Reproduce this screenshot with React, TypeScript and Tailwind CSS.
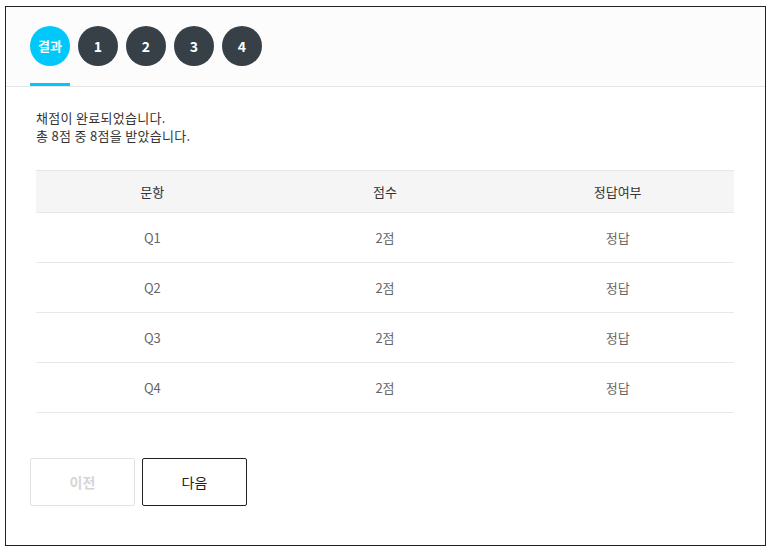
import React from "react";

const rows = [
  { q: "Q1", s: "2점", r: "정답" },
  { q: "Q2", s: "2점", r: "정답" },
  { q: "Q3", s: "2점", r: "정답" },
  { q: "Q4", s: "2점", r: "정답" },
];

export default function App() {
  const font = { fontFamily: '"Noto Sans CJK KR", "Noto Sans", sans-serif' };
  return (
    <div className="w-[770px] h-[552px] bg-white pt-[6px] pl-[5px]" style={font}>
      <div className="w-[761px] h-[540px] border border-[#222] flex flex-col">
        <div className="h-[80px] bg-[#fcfcfc] border-b border-[#e6e6e6] pl-[24px] pt-[19px] flex gap-[8px]">
          {["결과", "1", "2", "3", "4"].map((t, i) => (
            <div key={t} className="flex flex-col w-[40px]">
              <div
                className={
                  "w-[40px] h-[40px] rounded-full flex items-center justify-center text-white font-bold " +
                  (i === 0 ? "bg-[#00c8fb] text-[13px]" : "bg-[#373f47] text-[14px]")
                }
              >
                {t}
              </div>
              <div className={"mt-[17px] h-[3px] w-[40px] " + (i === 0 ? "bg-[#00c8fb]" : "")} />
            </div>
          ))}
        </div>
        <div className="pt-[22px] px-[30px]">
          <p className="text-[13px] leading-[18px] tracking-[0.3px] text-[#333]">채점이 완료되었습니다.</p>
          <p className="text-[13px] leading-[18px] tracking-[0.3px] text-[#333]">총 8점 중 8점을 받았습니다.</p>
          <div className="mt-[25px] w-[698px]">
            <div className="grid grid-cols-3 h-[43px] bg-[#f5f5f5] border-t border-b border-[#e8e8e8] items-center text-center text-[13px] text-[#333]">
              <div>문항</div>
              <div>점수</div>
              <div>정답여부</div>
            </div>
            {rows.map((r) => (
              <div
                key={r.q}
                className="grid grid-cols-3 h-[50px] border-b border-[#e8e8e8] items-center text-center text-[13px] text-[#666]"
              >
                <div>{r.q}</div>
                <div>{r.s}</div>
                <div>{r.r}</div>
              </div>
            ))}
          </div>
        </div>
        <div className="pl-[24px] mt-[45px] flex gap-[7px]">
          <button className="w-[105px] h-[48px] border border-[#e2e2e2] rounded-[2px] text-[14px] font-bold text-[#d5d5d5] bg-white">
            이전
          </button>
          <button className="w-[105px] h-[48px] border border-[#222] rounded-[2px] text-[14px] text-[#222] bg-white">
            다음
          </button>
        </div>
      </div>
    </div>
  );
}
